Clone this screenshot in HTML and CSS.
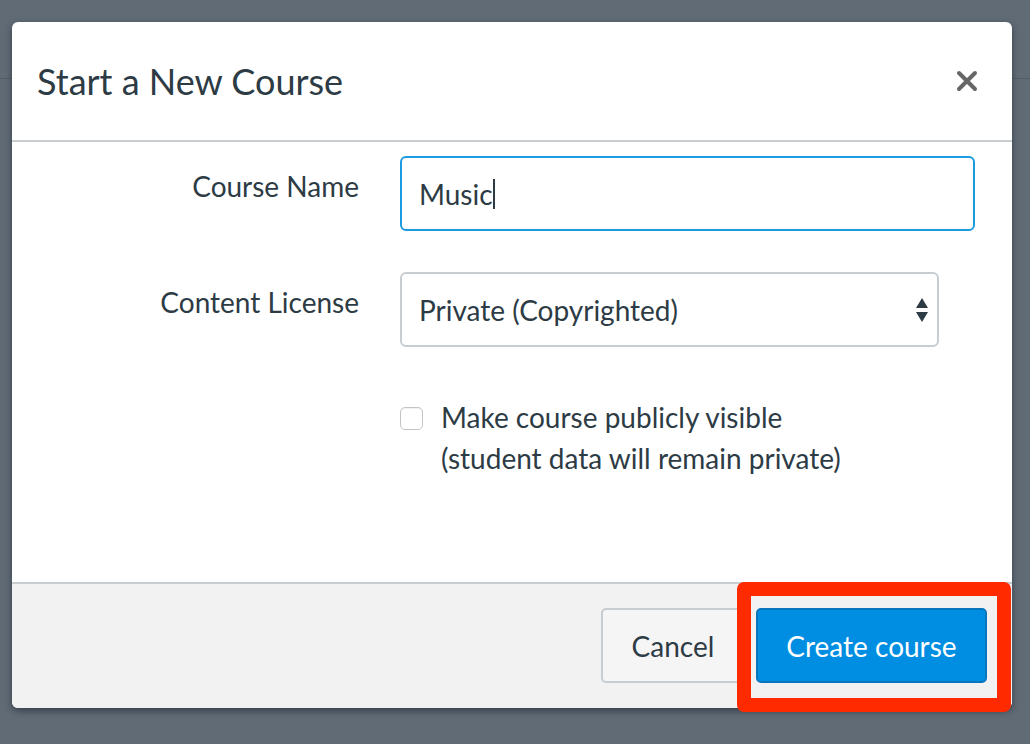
FILE: index.html
```html
<!DOCTYPE html>
<html>
<head>
<meta charset="utf-8">
<link rel="stylesheet" href="styles.css">
</head>
<body>
<div class="page-top"></div>
<div class="modal">
  <div class="modal-header">
    <h1 class="title">Start a New Course</h1>
    <svg class="close" width="22" height="22" viewBox="0 0 22 22"><path d="M3 3 L19 19 M19 3 L3 19" stroke="#666" stroke-width="4" stroke-linecap="round"/></svg>
  </div>
  <div class="modal-body">
    <div class="form">
      <label class="label">Course Name</label>
      <div class="input focused"><span>Music</span><span class="caret"></span></div>
      <label class="label">Content License</label>
      <div class="input select"><span>Private (Copyrighted)</span>
        <svg class="arrows" width="14" height="26" viewBox="0 0 14 26"><path d="M7 1 L13 11 L1 11 Z M1 15 L13 15 L7 25 Z" fill="#2d3b45"/></svg>
      </div>
      <div></div>
      <div class="check-row">
        <span class="checkbox"></span>
        <span class="check-text">Make course publicly visible<br>(student data will remain private)</span>
      </div>
    </div>
  </div>
  <div class="modal-footer">
    <button class="btn cancel">Cancel</button>
    <button class="btn primary">Create course</button>
  </div>
  <div class="highlight"></div>
</div>
</body>
</html>
```
FILE: styles.css
```css
html, body {
  margin: 0;
  padding: 0;
}
body {
  width: 1030px;
  height: 744px;
  overflow: hidden;
  background: #606b75;
  font-family: Lato, "Open Sans", sans-serif;
  color: #2d3b45;
  position: relative;
}
.page-top {
  height: 78px;
  border-bottom: 1px solid #535e67;
}
.modal {
  position: absolute;
  left: 12px;
  top: 22px;
  width: 1000px;
  background: #fff;
  border-radius: 6px;
  box-shadow: 0 3px 7px rgba(20, 30, 40, 0.55);
}
.modal-header {
  height: 118px;
  border-bottom: 2px solid #c7cdd1;
  display: flex;
  align-items: center;
  justify-content: space-between;
  padding: 0 34px 0 25px;
}
.title {
  margin: 0;
  font-weight: 400;
  font-size: 36px;
  color: #2d3b45;
}
.close {
  display: block;
}
.modal-body {
  height: 440px;
  padding-top: 14px;
  box-sizing: border-box;
}
.form {
  display: grid;
  grid-template-columns: 347px 1fr;
  column-gap: 41px;
  row-gap: 41px;
}
.label {
  text-align: right;
  font-size: 28px;
  padding-top: 14px;
  line-height: 32px;
}
.input {
  height: 75px;
  box-sizing: border-box;
  border: 2px solid #c7cdd1;
  border-radius: 6px;
  display: flex;
  align-items: center;
  padding: 0 17px;
  font-size: 28px;
  width: 575px;
}
.input.focused {
  border-color: #1d9be0;
}
.caret {
  display: inline-block;
  width: 2px;
  height: 30px;
  background: #2d3b45;
}
.input.select {
  width: 539px;
  justify-content: space-between;
  padding-right: 8px;
}
.arrows {
  display: block;
}
.check-row {
  display: flex;
  align-items: flex-start;
  margin-top: 18px;
}
.checkbox {
  width: 21px;
  height: 21px;
  border: 1px solid #c0c5c9;
  border-radius: 5px;
  margin-top: 1px;
  margin-right: 18px;
  background: #fff;
  flex: none;
  box-shadow: inset 0 1px 1px rgba(0, 0, 0, 0.06);
}
.check-text {
  font-size: 28px;
  line-height: 41px;
  margin-top: -9px;
}
.modal-footer {
  height: 124px;
  border-top: 2px solid #c7cdd1;
  background: #f2f2f2;
  border-radius: 0 0 6px 6px;
  display: flex;
  justify-content: flex-end;
  align-items: center;
  padding-right: 25px;
  gap: 11px;
}
.btn {
  height: 75px;
  box-sizing: border-box;
  border-radius: 5px;
  font-family: Lato, "Open Sans", sans-serif;
  font-size: 28px;
  padding: 0 28px;
  margin-top: -1px;
}
.cancel {
  background: #f5f5f5;
  border: 2px solid #c7cdd1;
  color: #2d3b45;
  width: 144px;
}
.primary {
  background: #008ee2;
  border: 2px solid #0776bd;
  color: #fff;
  width: 231px;
}
.highlight {
  position: absolute;
  left: 725px;
  top: 560px;
  width: 274px;
  height: 130px;
  box-sizing: border-box;
  border: 14px solid #ff2a00;
  border-radius: 7px;
}
```
